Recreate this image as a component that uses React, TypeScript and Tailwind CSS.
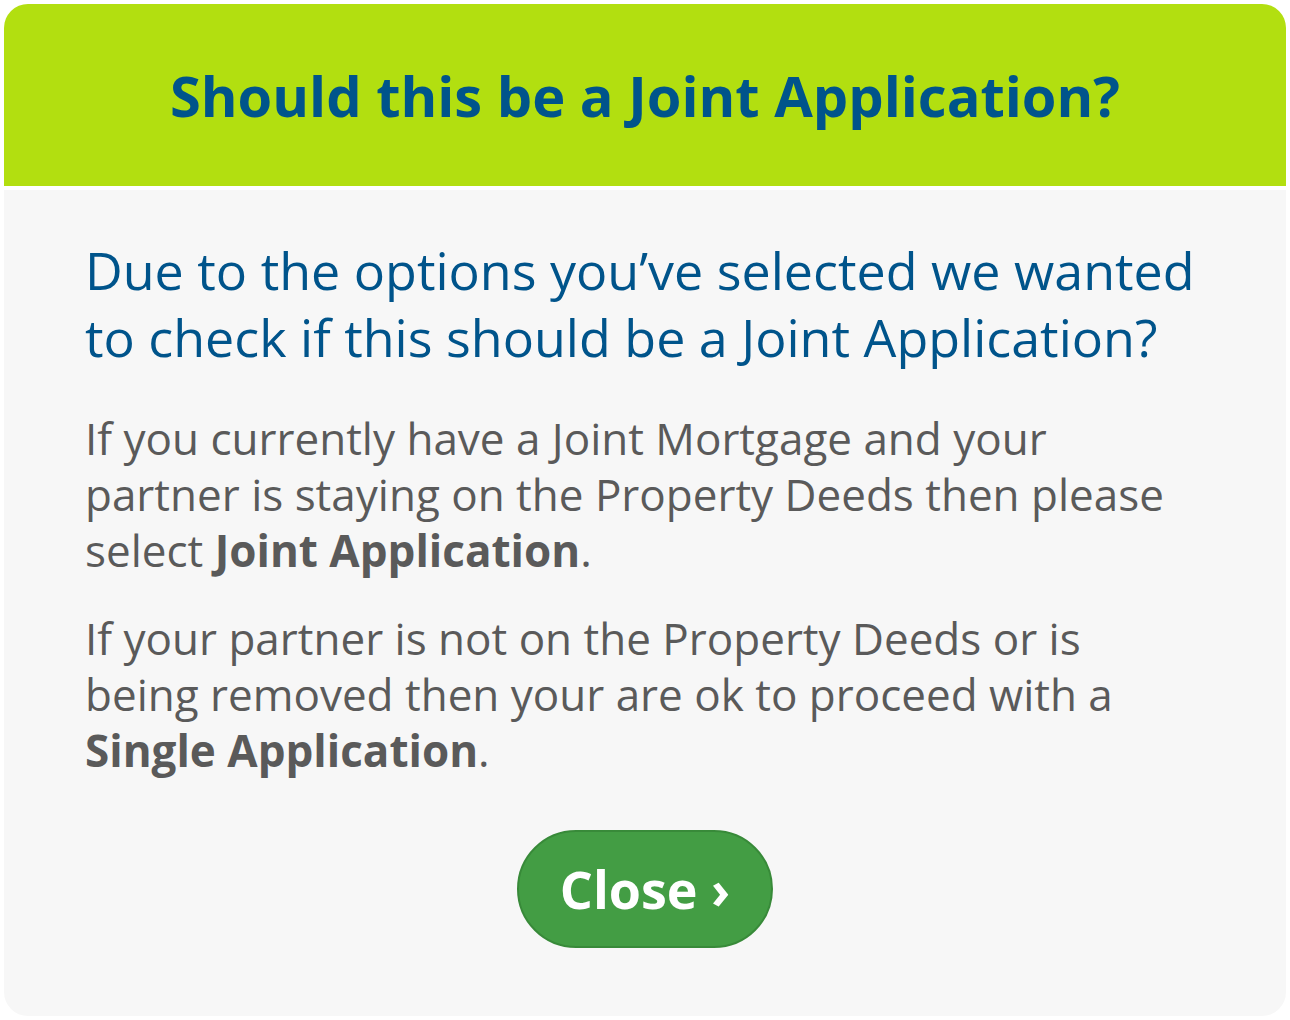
export default function App() {
  return (
    <div className="min-h-screen bg-white p-[4px]" style={{ fontFamily: '"Open Sans", "Noto Sans", sans-serif' }}>
      <div className="w-[1282px] h-[1012px] rounded-[24px] overflow-hidden flex flex-col bg-white">
        <div className="h-[182px] bg-[#b2df10] flex items-center justify-center">
          <h1 className="text-[56px] font-bold text-[#00548b] leading-none">Should this be a Joint Application?</h1>
        </div>
        <div className="mt-[4px] flex-1 bg-[#f7f7f7] px-[81px] pt-[46px]">
          <h2 className="text-[52px] leading-[67px] text-[#00548b]">
            Due to the options you’ve selected we wanted to check if this should be a Joint Application?
          </h2>
          <p className="mt-[40px] text-[44px] leading-[56px] text-[#5a5a5a]">
            If you currently have a Joint Mortgage and your partner is staying on the Property Deeds then please select <strong className="font-bold">Joint Application</strong>.
          </p>
          <p className="mt-[32px] text-[44px] leading-[56px] text-[#5a5a5a]">
            If your partner is not on the Property Deeds or is being removed then your are ok to proceed with a <strong className="font-bold">Single Application</strong>.
          </p>
          <div className="mt-[52px] flex justify-center">
            <button className="w-[256px] h-[118px] rounded-full bg-[#439d44] border-2 border-[#388a39] text-white text-[52px] font-bold leading-none">
              Close ›
            </button>
          </div>
        </div>
      </div>
    </div>
  );
}
